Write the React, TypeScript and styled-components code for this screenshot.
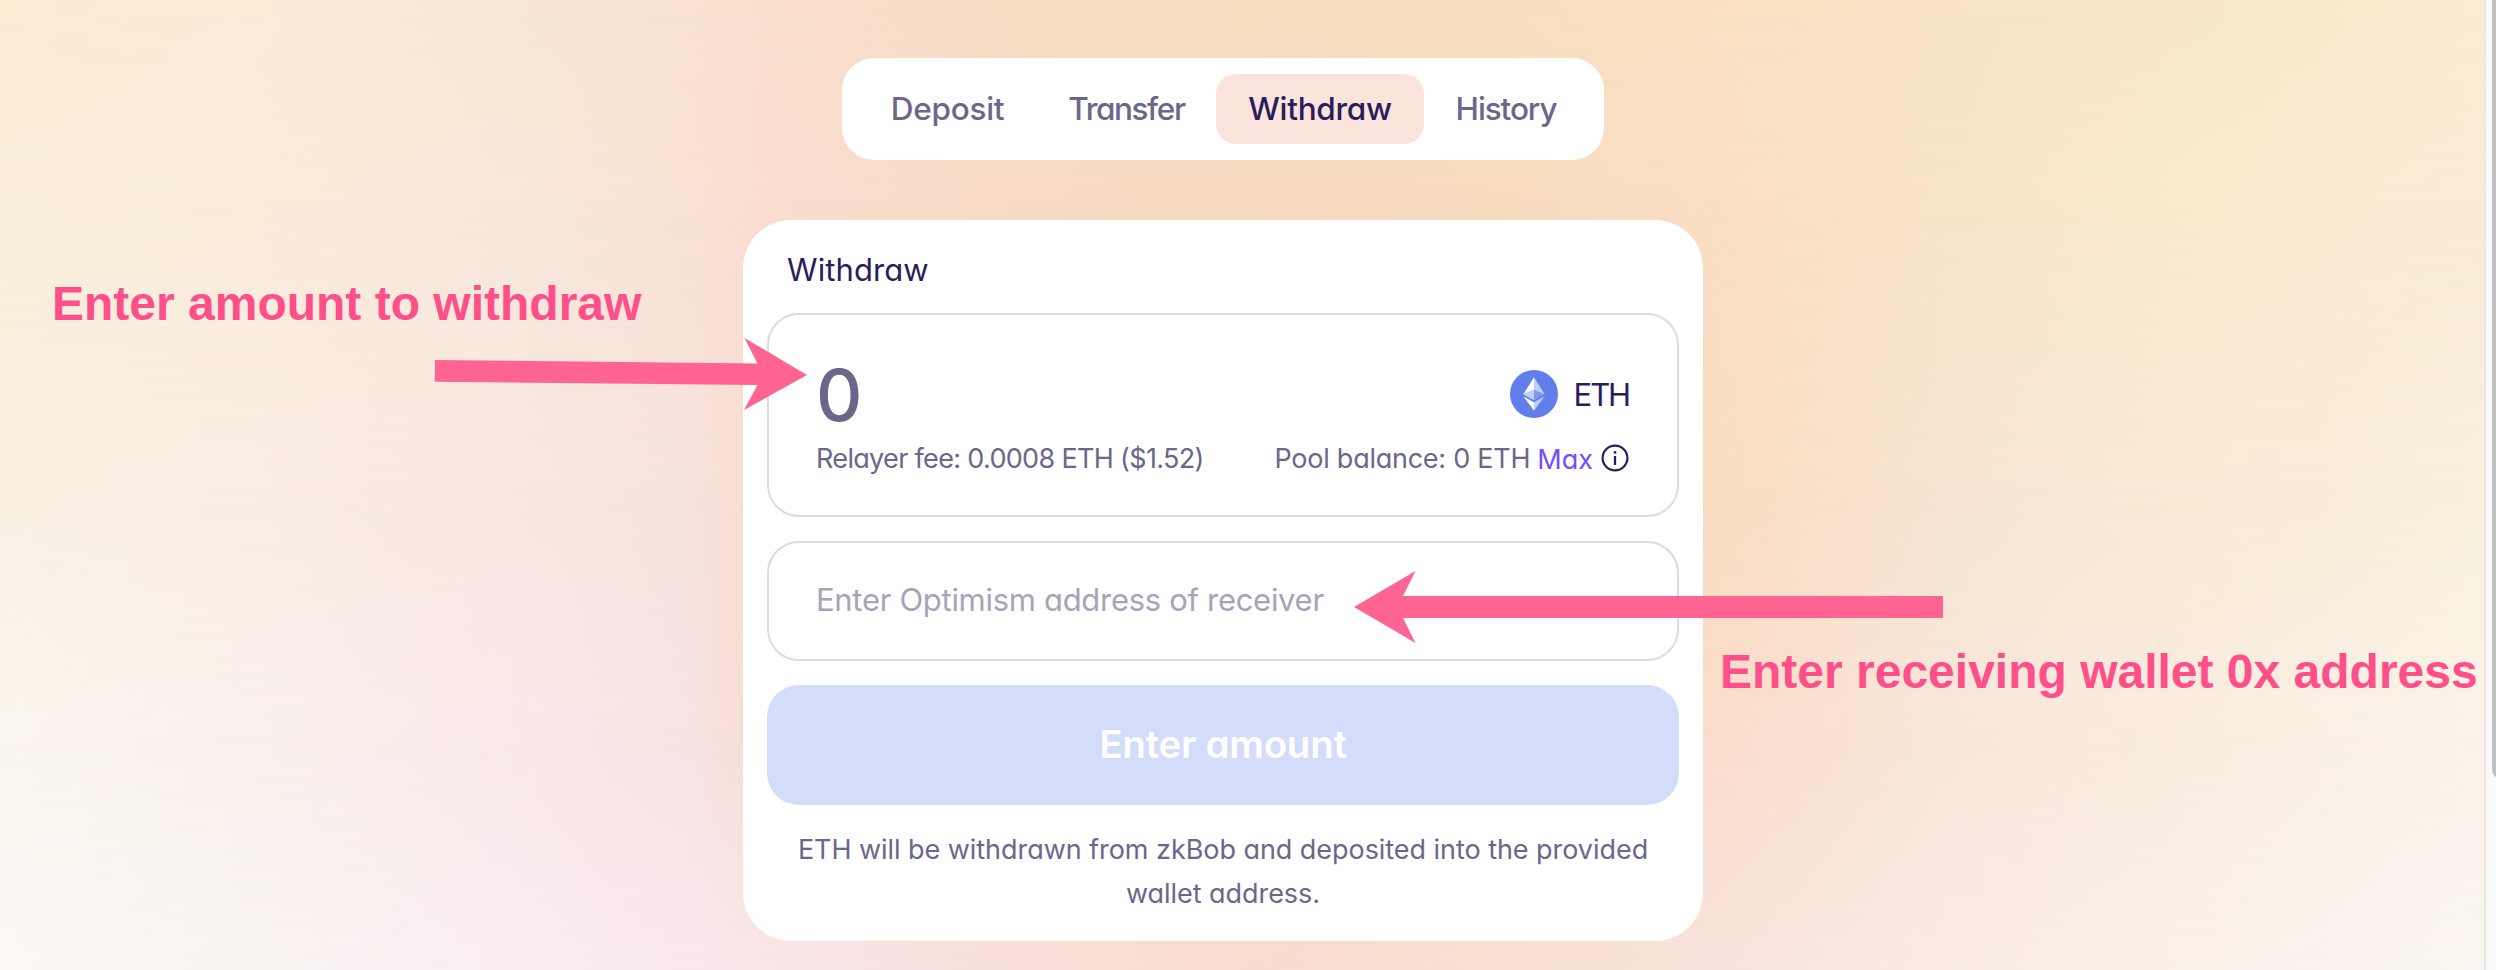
import React from 'react';
import styled, { createGlobalStyle } from 'styled-components';

const GlobalStyle = createGlobalStyle`
  * { box-sizing: border-box; }
  body {
    margin: 0;
    overflow: hidden;
    font-family: Inter, "Liberation Sans", sans-serif;
    font-feature-settings: "cv11";
  }
`;

const color = {
  ink: '#2a1d5b',
  muted: '#6d668a',
  placeholder: '#a7a3b9',
  line: '#dcd9eb',
  link: '#754cff',
  note: '#ff4f8b',
  arrow: '#ff6492',
};

const STOPS = [0, 250, 500, 695, 760, 1000, 1250, 1500, 1704, 1950, 2200, 2484];

const BANDS: { from: number; to: number; colors: string[] }[] = [
  { from: -1, to: 0, colors: ['#f9edd4', '#fbecd8', '#f8e7d5', '#f9e3d1', '#f9dfce', '#f8dcc4', '#f8debf', '#f8dfbf', '#f9e1c1', '#f8e5c5', '#f8e8c9', '#f9edd2'] },
  { from: 0, to: 200, colors: ['#f9eeda', '#f9ecdb', '#f8e8db', '#f9e2d6', '#f9ddd0', '#f8dac6', '#f7d9c0', '#f8dbbd', '#f9dec4', '#f8e5ca', '#f9ebce', '#f9ecd6'] },
  { from: 200, to: 485, colors: ['#f9f0e2', '#f9ede4', '#f8e8e0', '#f7e3dd', '#f9dccd', '#f8daca', '#f8dac6', '#f8dac0', '#f8dcc0', '#f7e5d2', '#f9ead6', '#f8f0dc'] },
  { from: 485, to: 727, colors: ['#faf5ed', '#f9f0ea', '#f9e9e9', '#f7e3e2', '#f9ddd2', '#f8dcd0', '#f8dace', '#f8dacb', '#fadcca', '#f8e7db', '#f9ede0', '#faf3e9'] },
  { from: 727, to: 970, colors: ['#fbf8f5', '#f8f3f1', '#f9edf1', '#f8e8ed', '#f8e6e8', '#f8e0db', '#f8dbd0', '#f7dfd3', '#f8e3dc', '#f9ebe4', '#f9f0e8', '#faf5f0'] },
];

const Page = styled.div`
  position: relative;
  width: 2496px;
  height: 970px;
  display: flex;
  overflow: hidden;
`;

const Backdrop = styled.div`
  position: absolute;
  inset: 0;
`;

const Band = styled.div<{ $from: number; $to: number; $colors: string[] }>`
  position: absolute;
  inset: 0;
  background: linear-gradient(90deg, ${(p) => p.$colors.map((c, i) => `${c} ${STOPS[i]}px`).join(', ')});
  mask-image: linear-gradient(180deg, transparent ${(p) => p.$from}px, #000 ${(p) => p.$to}px);
`;

const Main = styled.main`
  position: relative;
  width: 2484px;
  padding: 58px 38px 0 0;
  display: flex;
  flex-direction: column;
  align-items: center;
  gap: 60px;
`;

const Tabs = styled.nav`
  display: grid;
  grid-template-columns: 179px 179px 208px 164px;
  height: 102px;
  padding: 16px 16px 16px;
  border-radius: 32px;
  background: #fff;
`;

const Tab = styled.a<{ $active?: boolean; $spacing: number }>`
  display: flex;
  align-items: center;
  justify-content: center;
  padding-bottom: 1px;
  border-radius: 20px;
  font-size: 31.5px;
  font-weight: 500;
  letter-spacing: ${(p) => p.$spacing}px;
  color: ${(p) => (p.$active ? color.ink : color.muted)};
  background: ${(p) => (p.$active ? '#fbe4dc' : 'transparent')};
`;

const Card = styled.section`
  width: 960px;
  height: 721px;
  padding: 24px;
  border-radius: 48px;
  background: #fff;
  display: flex;
  flex-direction: column;
`;

const Title = styled.h1`
  margin: 0 0 17px 20px;
  font-size: 31px;
  line-height: 52px;
  font-weight: 400;
  letter-spacing: 0.1px;
  color: ${color.ink};
`;

const Field = styled.div`
  border: 2px solid ${color.line};
  border-radius: 32px;
  margin-bottom: 24px;
`;

const AmountField = styled(Field)`
  height: 204px;
  padding: 39px 48px 0 47px;
`;

const Row = styled.div<{ $height: number }>`
  display: flex;
  align-items: center;
  justify-content: space-between;
  height: ${(p) => p.$height}px;
`;

const Amount = styled.span`
  font-size: 72px;
  line-height: 79px;
  font-weight: 500;
  color: ${color.muted};
`;

const Token = styled.span`
  display: flex;
  align-items: center;
  gap: 16px;
  font-size: 31px;
  letter-spacing: -2.1px;
  color: ${color.ink};
`;

const Small = styled.span<{ $spacing?: number }>`
  font-size: 27px;
  letter-spacing: ${(p) => p.$spacing ?? 0}px;
  color: ${color.muted};
`;

const Balance = styled.span`
  display: flex;
  align-items: center;
`;

const MaxLink = styled.a`
  margin: 2px 8px 0 7px;
  font-size: 27px;
  color: ${color.link};
`;

const AddressField = styled(Field)`
  height: 120px;
  padding: 0 48px 4px 47px;
  display: flex;
  align-items: center;
  font-size: 31px;
  letter-spacing: -0.3px;
  color: ${color.placeholder};
`;

const Submit = styled.button`
  height: 120px;
  border: 0;
  padding: 0 0 2px;
  border-radius: 32px;
  font: inherit;
  font-size: 38.5px;
  font-weight: 600;
  letter-spacing: -0.25px;
  color: #fff;
  background: #d3dcf9;
`;

const Hint = styled.p`
  margin: 23px 0 0;
  text-align: center;
  font-size: 27px;
  line-height: 44px;
  letter-spacing: -0.05px;
  color: ${color.muted};
`;

const Scrollbar = styled.div`
  position: relative;
  width: 12px;
  padding-left: 6px;
  border-left: 2px solid #e6e6e6;
  background: #fafafa;
`;

const Thumb = styled.div`
  width: 16px;
  height: 778px;
  border-radius: 0 0 8px 8px;
  background: #c1c1c1;
`;

const Note = styled.div<{ $x: number; $y: number }>`
  position: absolute;
  left: ${(p) => p.$x}px;
  top: ${(p) => p.$y}px;
  font: bold 48px/54px "Liberation Sans", Arial, sans-serif;
  white-space: nowrap;
  color: ${color.note};
`;

const Arrows = styled.svg`
  position: absolute;
  left: 0;
  top: 0;
`;

const EthIcon = () => (
  <svg width="48" height="48" viewBox="0 0 32 32">
    <circle cx="16" cy="16" r="16" fill="#627eea" />
    <g fill="#fff" transform="translate(16 16) scale(.95 .925) translate(-16.5 -16)">
      <path d="M16.498 4v8.87l7.497 3.35z" fillOpacity=".602" />
      <path d="M16.498 4L9 16.22l7.498-3.35z" />
      <path d="M16.498 21.968v6.027L24 17.616z" fillOpacity=".602" />
      <path d="M16.498 27.995v-6.028L9 17.616z" />
      <path d="M16.498 20.573l7.497-4.353-7.497-3.348z" fillOpacity=".2" />
      <path d="M9 16.22l7.498 4.353v-7.701z" fillOpacity=".602" />
    </g>
  </svg>
);

const InfoIcon = () => (
  <svg width="28" height="28" viewBox="0 0 28 28" fill="none" stroke={color.ink}>
    <circle cx="14" cy="14" r="12.4" strokeWidth="2.2" />
    <path d="M14 12v9" strokeWidth="2.3" />
    <path d="M14 7.2v2.4" strokeWidth="2.5" />
  </svg>
);

export default function App() {
  return (
    <Page>
      <GlobalStyle />
      <Backdrop>
        {BANDS.map((b) => (
          <Band key={b.to} $from={b.from} $to={b.to} $colors={b.colors} />
        ))}
      </Backdrop>
      <Main>
        <Tabs>
          <Tab $spacing={-0.25}>Deposit</Tab>
          <Tab $spacing={-1.4}>Transfer</Tab>
          <Tab $active $spacing={-0.3}>Withdraw</Tab>
          <Tab $spacing={-1.1}>History</Tab>
        </Tabs>
        <Card>
          <Title>Withdraw</Title>
          <AmountField>
            <Row $height={80}>
              <Amount>0</Amount>
              <Token>
                <EthIcon />
                <span>ETH</span>
              </Token>
            </Row>
            <Row $height={48}>
              <Small $spacing={-0.67}>Relayer fee: 0.0008 ETH ($1.52)</Small>
              <Balance>
                <Small $spacing={-0.25}>Pool balance: 0 ETH</Small>
                <MaxLink>Max</MaxLink>
                <InfoIcon />
              </Balance>
            </Row>
          </AmountField>
          <AddressField>Enter Optimism address of receiver</AddressField>
          <Submit>Enter amount</Submit>
          <Hint>
            ETH will be withdrawn from zkBob and deposited into the provided
            <br />
            wallet address.
          </Hint>
        </Card>
      </Main>
      <Scrollbar>
        <Thumb />
      </Scrollbar>
      <Arrows width="2496" height="970" fill={color.arrow}>
        <path d="M435 360L757.5 363.5L744.5 338L807 375L744 410L757.5 385L434.7 381.8z" />
        <path d="M1943 596H1403L1415.5 571L1354 607L1415.5 643L1403 618H1943z" />
      </Arrows>
      <Note $x={52} $y={277}>Enter amount to withdraw</Note>
      <Note $x={1720} $y={645}>Enter receiving wallet 0x address</Note>
    </Page>
  );
}
